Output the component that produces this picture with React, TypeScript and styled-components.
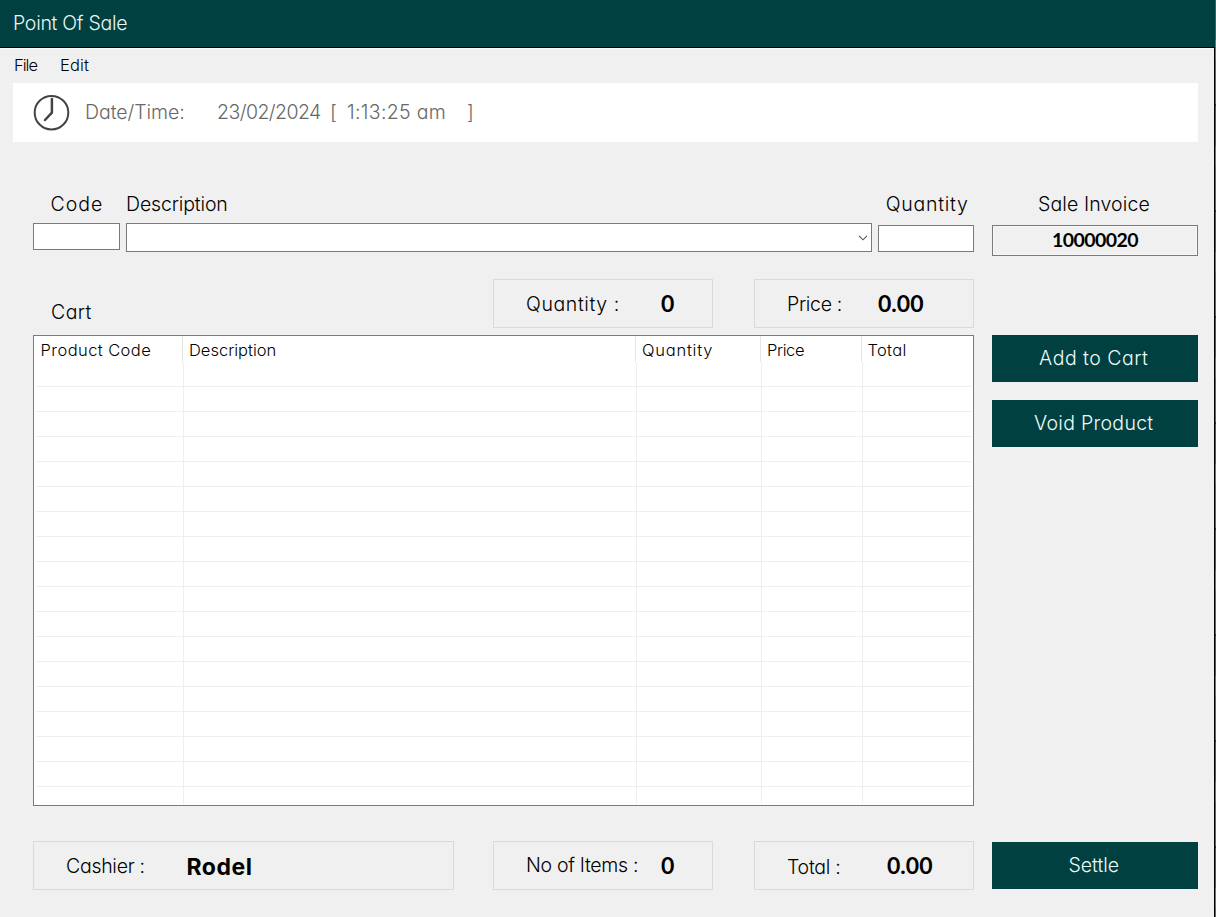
import React from "react";
import styled, { createGlobalStyle } from "styled-components";

const TEAL = "#004040";
const FACE = "#f0f0f0";
const EDGE = "#7a7a7a";
const GRID = "#eeeeee";

const GlobalStyle = createGlobalStyle`
  *, *::before, *::after { box-sizing: border-box; }
  body {
    margin: 0;
    background: ${FACE};
    color: #000;
    font-family: Inter, "Liberation Sans", sans-serif;
    font-feature-settings: "cv11" 1;
    font-size: 19.5px;
    font-weight: 300;
    line-height: 24px;
  }
`;

const Screen = styled.div`
  display: grid;
  grid-template-columns: 1214px 1px 1px;
  grid-template-rows: 47px 1px 869px;
  width: 1216px;
  height: 917px;
  overflow: hidden;
`;

const Desktop = styled.div`
  grid-column: 3;
  grid-row: 1 / -1;
  background: repeating-linear-gradient(
    #55585a 0 40px, #6f7658 40px 60px, #606467 60px 104px, #2b2d2f 104px 106px
  );
`;

const TitleBar = styled.header`
  grid-column: 1 / 3;
  grid-row: 1;
  display: flex;
  align-items: center;
  padding: 0 0 2px 13px;
  background: ${TEAL};
  color: #e9f6f5;
`;

const TitleRule = styled.div`
  grid-column: 1 / 3;
  grid-row: 2;
  background: #000;
`;

const WindowEdge = styled.div`
  grid-column: 2;
  grid-row: 3;
  background: #000;
`;

const WindowBody = styled.main`
  grid-column: 1;
  grid-row: 3;
  border-top: 1px solid #f8f8f8;
`;

const Text = styled.span<{ $spacing?: number; $shift?: number }>`
  white-space: pre;
  letter-spacing: ${({ $spacing = 0 }) => $spacing}px;
  margin-top: ${({ $shift = 0 }) => $shift * 2}px;
`;

const MenuBar = styled.nav`
  display: flex;
  align-items: center;
  height: 34px;
  padding: 0 0 2px 14px;
  font-size: 16.5px;
  font-weight: 350;
`;

const MenuItem = styled.div<{ $width: number }>`
  display: flex;
  width: ${({ $width }) => $width}px;
`;

const InfoBar = styled.section`
  display: flex;
  align-items: center;
  width: 1185px;
  height: 59px;
  margin-left: 13px;
  padding-left: 20px;
  background: #fff;
  color: #686868;
`;

const InfoSlot = styled.div<{ $width: number }>`
  display: flex;
  flex: none;
  width: ${({ $width }) => $width}px;
`;

const Content = styled.div`
  display: grid;
  grid-template-columns: 941px 206px;
  column-gap: 18px;
  padding: 50px 0 0 33px;
`;

const Fields = styled.form`
  display: grid;
  grid-template-columns: 87px 746px 96px;
  column-gap: 6px;
  height: 87px;
`;

const Field = styled.label<{ $gap: number; $indent?: number }>`
  display: flex;
  flex-direction: column;
  gap: ${({ $gap }) => $gap}px;

  > span { padding-left: ${({ $indent = 0 }) => $indent}px; }
`;

const TextInput = styled.input`
  width: 100%;
  height: 27px;
  padding: 0 4px;
  border: 1px solid ${EDGE};
  border-radius: 0;
  background: #fff;
  font: inherit;
  outline: none;
`;

const ComboBox = styled.div`
  display: flex;
  align-items: center;
  justify-content: flex-end;
  height: 29px;
  padding-right: 3px;
  border: 1px solid ${EDGE};
  background: #fff;
`;

const InvoiceBox = styled.output`
  display: flex;
  align-items: center;
  justify-content: center;
  height: 31px;
  padding-bottom: 2px;
  border: 1px solid ${EDGE};
  box-shadow: inset 0 0 0 1px #f8f8f8;
  font-family: Lato, sans-serif;
  font-size: 19.5px;
  font-weight: 700;
`;

const CartHeader = styled.div`
  display: grid;
  grid-template-columns: 419px 220px 220px;
  column-gap: 41px;
  height: 56px;
`;

const CartLabel = styled.h2`
  margin: 0;
  padding: 21px 0 0 18px;
  font-size: inherit;
  font-weight: inherit;
`;

const SummaryBox = styled.div<{ $width?: number }>`
  display: flex;
  align-items: center;
  width: ${({ $width = 220 }) => $width}px;
  height: 49px;
  padding-left: 32px;
  border: 1px solid #dadada;
`;

const SummaryLabel = styled.div<{ $width: number }>`
  display: flex;
  flex: none;
  width: ${({ $width }) => $width}px;
`;

const Amount = styled.strong`
  padding-bottom: 2px;
  font-family: Lato, sans-serif;
  font-size: 23px;
  font-weight: 700;
`;

const CashierName = styled.strong`
  padding-top: 2px;
  font-size: 23px;
  font-weight: 700;
  letter-spacing: 0.5px;
`;

const CartTable = styled.div`
  height: 471px;
  padding: 0 2px;
  overflow: hidden;
  border: 1px solid ${EDGE};
  background: #fff;
`;

const TableHead = styled.div`
  display: grid;
  grid-template-columns: 147px 453px 125px 101px 1fr;
  height: 26px;
  font-size: 16.5px;
  font-weight: 350;
`;

const HeadCell = styled.div`
  padding: 2px 0 0 6px;
  border-right: 1px solid #e5e5e5;

  &:first-child { padding-left: 4.6px; }
  &:last-child { padding-left: 5.5px; border-right: 0; }
`;

const TableRow = styled.div`
  display: grid;
  grid-template-columns: 148px 453px 125px 101px 1fr;
  height: 25px;

  &:last-child { height: 17px; }
`;

const Cell = styled.div`
  border-right: 1px solid ${GRID};
  border-bottom: 1px solid ${GRID};

  &:last-child { border-right: 0; }
  ${TableRow}:last-child & { border-bottom: 0; }
`;

const Footer = styled.footer`
  display: grid;
  grid-template-columns: 460px 261px 220px;
  padding-top: 35px;
`;

const SideColumn = styled.aside`
  display: flex;
  flex-direction: column;
`;

const InvoiceField = styled.div`
  display: flex;
  flex-direction: column;
  gap: 9px;
  height: 143px;
`;

const InvoiceLabel = styled.div`
  padding-left: 46px;
`;

const ActionButton = styled.button<{ $gap?: number }>`
  height: 47px;
  margin: 0 0 ${({ $gap = 0 }) => $gap}px;
  padding: 0 2.5px 1px 0;
  border: 0;
  background: ${TEAL};
  color: #eefaf9;
  font: inherit;
  font-feature-settings: inherit;
`;

const ClockIcon = () => (
  <svg width="37" height="37" viewBox="0 0 37 37" fill="none" stroke="#444" strokeLinecap="round" strokeLinejoin="round">
    <circle cx="18.5" cy="18.7" r="16.8" strokeWidth="2" />
    <path d="M18.9 5V18.6L12 26" strokeWidth="2.5" />
  </svg>
);

const Chevron = () => (
  <svg width="10" height="6" viewBox="0 0 10 6" fill="none" stroke="#555" strokeWidth="1.1">
    <path d="M1 0.8L5 4.8L9 0.8" />
  </svg>
);

const headings: [string, number][] = [
  ["Product Code", 0.42],
  ["Description", 0],
  ["Quantity", 0.75],
  ["Price", -0.4],
  ["Total", 0.3],
];

const rows = Array.from({ length: 18 }, (_, i) => i);

export default function App() {
  return (
    <>
      <GlobalStyle />
      <Screen>
        <TitleBar>
          <Text $spacing={-0.28}>Point Of Sale</Text>
        </TitleBar>
        <TitleRule />
        <WindowEdge />
        <Desktop />
        <WindowBody>
          <MenuBar>
            <MenuItem $width={46}><Text $spacing={-1}>File</Text></MenuItem>
            <MenuItem $width={46}><Text $spacing={0.1}>Edit</Text></MenuItem>
          </MenuBar>
          <InfoBar>
            <InfoSlot $width={52}><ClockIcon /></InfoSlot>
            <InfoSlot $width={132}><Text $spacing={-0.05} $shift={-1}>Date/Time:</Text></InfoSlot>
            <InfoSlot $width={113}><Text $spacing={-0.56} $shift={-1}>23/02/2024</Text></InfoSlot>
            <InfoSlot $width={17}><Text $shift={-1}>[</Text></InfoSlot>
            <InfoSlot $width={120}><Text $spacing={0.32} $shift={-1}>1:13:25 am</Text></InfoSlot>
            <Text $shift={-1}>]</Text>
          </InfoBar>
          <Content>
            <section>
              <Fields>
                <Field $gap={7} $indent={17.6}>
                  <Text $spacing={1}>Code</Text>
                  <TextInput />
                </Field>
                <Field as="div" $gap={7}>
                  <Text $spacing={-0.14}>Description</Text>
                  <ComboBox><Chevron /></ComboBox>
                </Field>
                <Field $gap={9} $indent={7.7}>
                  <Text $spacing={0.75}>Quantity</Text>
                  <TextInput />
                </Field>
              </Fields>
              <CartHeader>
                <CartLabel><Text $spacing={0.44}>Cart</Text></CartLabel>
                <SummaryBox>
                  <SummaryLabel $width={135}><Text $spacing={0.6}>Quantity :</Text></SummaryLabel>
                  <Amount>0</Amount>
                </SummaryBox>
                <SummaryBox>
                  <SummaryLabel $width={91}><Text $spacing={-0.32}>Price :</Text></SummaryLabel>
                  <Amount>0.00</Amount>
                </SummaryBox>
              </CartHeader>
              <CartTable>
                <TableHead>
                  {headings.map(([name, spacing]) => (
                    <HeadCell key={name}><Text $spacing={spacing}>{name}</Text></HeadCell>
                  ))}
                </TableHead>
                {rows.map((row) => (
                  <TableRow key={row}>
                    {headings.map(([name]) => <Cell key={name} />)}
                  </TableRow>
                ))}
              </CartTable>
              <Footer>
                <SummaryBox $width={421}>
                  <SummaryLabel $width={120.5}><Text $spacing={-0.28}>Cashier :</Text></SummaryLabel>
                  <CashierName>Rodel</CashierName>
                </SummaryBox>
                <SummaryBox>
                  <SummaryLabel $width={135}><Text $spacing={-0.3} $shift={-1}>No of Items :</Text></SummaryLabel>
                  <Amount>0</Amount>
                </SummaryBox>
                <SummaryBox>
                  <SummaryLabel $width={100}><Text $spacing={-0.25} $shift={1}>Total :</Text></SummaryLabel>
                  <Amount>0.00</Amount>
                </SummaryBox>
              </Footer>
            </section>
            <SideColumn>
              <InvoiceField>
                <InvoiceLabel><Text $spacing={0.12}>Sale Invoice</Text></InvoiceLabel>
                <InvoiceBox><Text $spacing={-0.55}>10000020</Text></InvoiceBox>
              </InvoiceField>
              <ActionButton $gap={18}><Text $spacing={0.5}>Add to Cart</Text></ActionButton>
              <ActionButton $gap={395}><Text $spacing={0.3}>Void Product</Text></ActionButton>
              <ActionButton><Text>Settle</Text></ActionButton>
            </SideColumn>
          </Content>
        </WindowBody>
      </Screen>
    </>
  );
}
